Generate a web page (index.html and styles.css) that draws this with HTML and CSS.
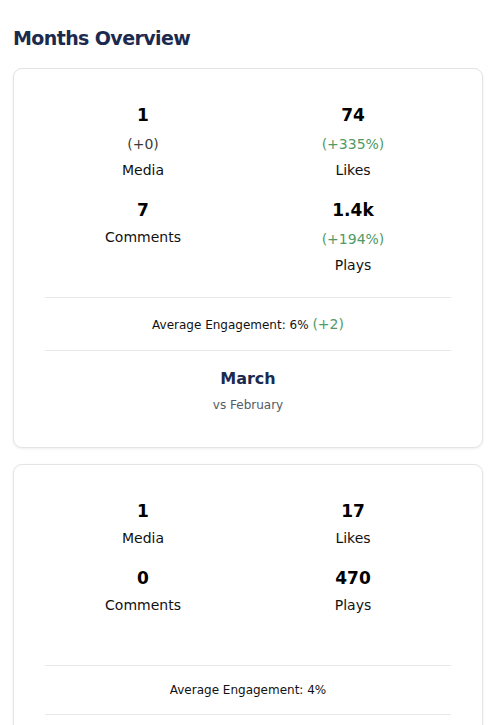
FILE: index.html
```html
<!DOCTYPE html>
<html lang="en">
<head>
<meta charset="utf-8">
<title>Months Overview</title>
<link rel="stylesheet" href="styles.css">
</head>
<body>
<main class="page">
  <h1 class="title">Months Overview</h1>

  <section class="card">
    <div class="stats">
      <div class="stat">
        <div class="stat-value">1</div>
        <div class="stat-change">(+0)</div>
        <div class="stat-label">Media</div>
      </div>
      <div class="stat">
        <div class="stat-value">74</div>
        <div class="stat-change stat-change--up">(+335%)</div>
        <div class="stat-label">Likes</div>
      </div>
      <div class="stat">
        <div class="stat-value">7</div>
        <div class="stat-label">Comments</div>
      </div>
      <div class="stat">
        <div class="stat-value">1.4k</div>
        <div class="stat-change stat-change--up">(+194%)</div>
        <div class="stat-label">Plays</div>
      </div>
    </div>
    <div class="engagement">Average Engagement: 6% <span class="engagement-change">(+2)</span></div>
    <div class="period">
      <div class="period-month">March</div>
      <div class="period-compare">vs February</div>
    </div>
  </section>

  <section class="card">
    <div class="stats">
      <div class="stat">
        <div class="stat-value">1</div>
        <div class="stat-label">Media</div>
      </div>
      <div class="stat">
        <div class="stat-value">17</div>
        <div class="stat-label">Likes</div>
      </div>
      <div class="stat">
        <div class="stat-value">0</div>
        <div class="stat-label">Comments</div>
      </div>
      <div class="stat">
        <div class="stat-value">470</div>
        <div class="stat-label">Plays</div>
      </div>
    </div>
    <div class="engagement">Average Engagement: 4%</div>
    <div class="period">
      <div class="period-month">February</div>
      <div class="period-compare">vs January</div>
    </div>
  </section>
</main>
</body>
</html>
```

FILE: styles.css
```css
html, body {
  margin: 0;
  padding: 0;
  background: #ffffff;
}

body {
  font-family: "DejaVu Sans", "Noto Sans", sans-serif;
  color: #111111;
}

.page {
  padding: 24px 8px 0 13px;
}

.title {
  margin: 0 0 16px;
  font-size: 19px;
  line-height: 28px;
  font-weight: 700;
  color: #1b2a4e;
  letter-spacing: -0.6px;
}

.card {
  background: #ffffff;
  border: 1px solid #e4e4e4;
  border-radius: 9px;
  box-shadow: 0 1px 3px rgba(0, 0, 0, 0.07);
  padding: 33px 31px 32px;
  margin-bottom: 16px;
}

.stats {
  display: grid;
  grid-template-columns: 1fr 1fr;
  column-gap: 14px;
  row-gap: 14px;
  align-content: start;
  min-height: 148px;
  margin-bottom: 19px;
}

.stat {
  display: flex;
  flex-direction: column;
  align-items: center;
  text-align: center;
}

.stat-value {
  font-size: 17px;
  line-height: 26px;
  font-weight: 800;
  color: #000000;
  margin-bottom: 1px;
}

.stat-change {
  margin-top: 2px;
  font-size: 14px;
  line-height: 26px;
  font-weight: 400;
  color: #3a3a3a;
}

.stat-change--up {
  color: #4f9a66;
}

.stat-label {
  font-size: 14px;
  line-height: 26px;
  color: #111111;
}

.engagement {
  border-top: 1px solid #e8e8e8;
  border-bottom: 1px solid #e8e8e8;
  padding: 15px 0;
  text-align: center;
  font-size: 12px;
  line-height: 18px;
  color: #111111;
}

.engagement-change {
  font-size: 14px;
  line-height: 22px;
  font-weight: 400;
  color: #4f9a66;
}

.period {
  padding-top: 16px;
  text-align: center;
}

.period-month {
  font-size: 16px;
  line-height: 24px;
  font-weight: 700;
  color: #1b2a4e;
}

.period-compare {
  margin-top: 4px;
  font-size: 12px;
  line-height: 20px;
  color: #555a66;
}
```
